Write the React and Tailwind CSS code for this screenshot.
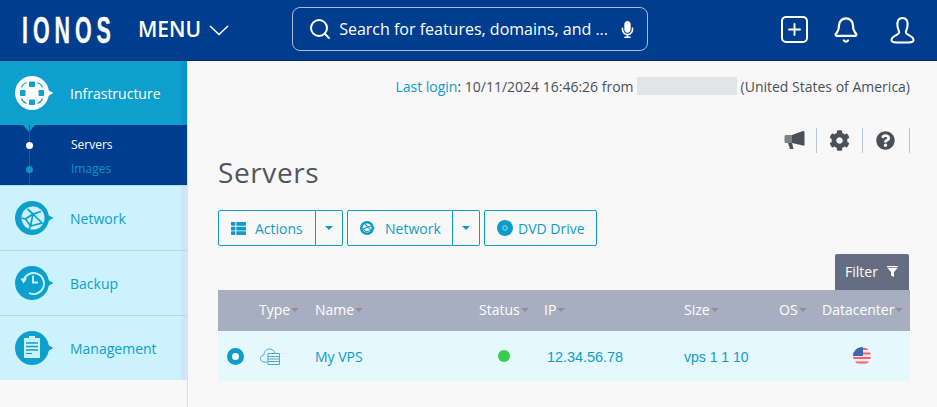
import React from "react";
import { Search, Plus, Bell } from "lucide-react";
import { FaCog, FaQuestionCircle, FaThList, FaMicrophone } from "react-icons/fa";

// round bubble with a small tail on the right, used by the side menu
function Bubble({ fill, children }) {
  return (
    <svg width="40" height="36" viewBox="0 0 40 36" className="shrink-0">
      <circle cx="17" cy="18" r="17" fill={fill} />
      <path d="M32 14.5 L38.5 18 L32 21.5 Z" fill={fill} />
      {children}
    </svg>
  );
}

function InfraIcon() {
  return (
    <Bubble fill="#ffffff">
      <rect x="14" y="6.5" width="6" height="5.5" rx="0.8" fill="#0da0cf" />
      <rect x="14" y="24.5" width="6" height="5.5" rx="0.8" fill="#0da0cf" />
      <rect x="5" y="15" width="5.5" height="6" rx="0.8" fill="#0da0cf" />
      <rect x="23.5" y="15" width="5.5" height="6" rx="0.8" fill="#0da0cf" />
      <path d="M6.5 12.5 Q7.5 9 11.5 7.5 M22.5 7.5 Q26.5 9 27.5 12.5 M27.5 23.5 Q26.5 27 22.5 28.5 M11.5 28.5 Q7.5 27 6.5 23.5" stroke="#0da0cf" strokeWidth="1.1" fill="none" />
    </Bubble>
  );
}

function NetworkIcon() {
  return (
    <Bubble fill="#0da0cf">
      <circle cx="18" cy="18" r="11.5" fill="#ccf3fd" />
      <path d="M12.5 9 L18 14 L26 11.5 M18 14 L10.5 19 L15.5 26 L27 23 L18 14 M10.5 19 L6.5 18 M15.5 26 L14 29.5 M18 14 L15.5 26" stroke="#0da0cf" strokeWidth="1.7" fill="none" />
    </Bubble>
  );
}

function BackupIcon() {
  return (
    <Bubble fill="#0da0cf">
      <path d="M8.5 15.5 A10.5 10.5 0 1 1 14 28" stroke="#ccf3fd" strokeWidth="1.8" fill="none" />
      <path d="M5.5 13.5 L12 13.5 L8.5 18.5 Z" fill="#ccf3fd" />
      <path d="M18 10.5 V17.5 H23" stroke="#ccf3fd" strokeWidth="1.8" fill="none" />
    </Bubble>
  );
}

function ManagementIcon() {
  return (
    <Bubble fill="#0da0cf">
      <rect x="9" y="8" width="16" height="20" fill="#ccf3fd" />
      <rect x="14" y="6" width="6" height="2" fill="#ccf3fd" />
      <path d="M11 13 H23 M11 16.5 H23 M11 20 H23" stroke="#0da0cf" strokeWidth="1.5" />
      <path d="M11 23.5 H17" stroke="#0da0cf" strokeWidth="1.1" />
    </Bubble>
  );
}

function SideItem({ icon, label, active }) {
  return (
    <div className={`flex h-16 items-center pl-[15px] ${active ? "bg-[#0da0cf] text-white" : "bg-[#ccf3fd] text-[#0da0cf]"}`}>
      <div className="w-[55px]">{icon}</div>
      <span className="text-[14px]">{label}</span>
      <div className={`ml-auto h-full w-[6px] ${active ? "bg-[#0a96c6]" : "bg-[#cfe6f5]"}`} />
    </div>
  );
}

function Caret() {
  return <span className="inline-block h-0 w-0 border-x-[4px] border-t-[4px] border-x-transparent border-t-[#0d9cc9]" />;
}

function HeadCell({ label, className }) {
  return (
    <div className={`flex items-center gap-[1px] ${className}`}>
      <span>{label}</span>
      <span className="inline-block h-0 w-0 border-x-[4px] border-t-[4px] border-x-transparent border-t-[#8d8f98]" />
    </div>
  );
}

function ToolButton({ children, className }) {
  return (
    <div className={`flex h-full items-center border border-[#0d9cc9] ${className}`}>{children}</div>
  );
}

function UsFlag() {
  return (
    <svg width="18" height="18" viewBox="0 0 18 18">
      <defs>
        <clipPath id="flagclip"><circle cx="9" cy="9" r="9" /></clipPath>
      </defs>
      <g clipPath="url(#flagclip)">
        <rect width="18" height="18" fill="#fbe9e9" />
        <path d="M0 2 H18 M0 6.5 H18 M0 11 H18 M0 15.5 H18" stroke="#e8686c" strokeWidth="2" />
        <rect width="10" height="9" fill="#3f66ad" />
      </g>
    </svg>
  );
}

export default function App() {
  return (
    <div className="flex h-[407px] w-[937px] flex-col overflow-hidden bg-[#f8f8f8] text-[14px]" style={{ fontFamily: '"Open Sans", sans-serif' }}>
      {/* Header */}
      <header className="flex h-[61px] shrink-0 items-center border-b border-[#0b2a5e] bg-[#003d8f] text-white">
        <div className="ml-[22px] w-[92px] overflow-visible">
          <span className="block origin-left scale-x-[0.58] text-[37px] font-bold leading-none tracking-[8.5px] [-webkit-text-stroke:0.3px_white]" style={{ fontFamily: '"Liberation Sans", sans-serif' }}>IONOS</span>
        </div>
        <div className="ml-[24px] flex items-center gap-[8px]">
          <span className="text-[21px] font-semibold">MENU</span>
          <svg width="20" height="11" viewBox="0 0 20 11" fill="none" stroke="white" strokeWidth="1.6"><path d="M1 1 L10 9.5 L19 1" /></svg>
        </div>
        <div className="mb-[2px] ml-[63px] flex h-[44px] w-[356px] items-center rounded-[8px] border border-[#a9bcd8] pl-[15px] pr-[11px]">
          <Search size={24} strokeWidth={2} />
          <span className="ml-[7px] text-[16px]">Search for features, domains, and ...</span>
          <FaMicrophone size={17} className="ml-auto" />
        </div>
        <div className="mb-[1px] ml-[133px] flex h-[27px] w-[27px] items-center justify-center rounded-[5px] border-2 border-white">
          <Plus size={19} strokeWidth={2.4} />
        </div>
        <Bell size={28} strokeWidth={1.9} className="ml-[24px]" />
        <svg width="29" height="28" viewBox="0 0 28 28" fill="none" stroke="white" strokeWidth="2.1" className="ml-[28px]">
          <path d="M14 2 C9.5 2 8.5 6 9 10 C9.3 13 11 15 10.5 17 C10 19 3 20 3 24 C3 26 5 26.5 8 26.5 H20 C23 26.5 25 26 25 24 C25 20 18 19 17.5 17 C17 15 18.7 13 19 10 C19.5 6 18.5 2 14 2 Z" />
        </svg>
      </header>

      <div className="flex min-h-0 flex-1">
        {/* Side menu */}
        <aside className="w-[188px] shrink-0 border-r border-[#dcdfe5]">
          <SideItem active label="Infrastructure" icon={<InfraIcon />} />
          <div className="relative h-[61px] border-b border-[#b5d9ea] bg-[#003d8f] pt-[9px] text-[12px]">
            <div className="absolute left-[23px] top-0 h-0 w-0 border-x-[6px] border-t-[7px] border-x-transparent border-t-[#0da0cf]" />
            <div className="absolute bottom-0 left-[29px] top-0 w-px bg-[#1c5a9f]" />
            <div className="flex h-[22px] items-center text-white">
              <span className="relative ml-[26px] h-[7px] w-[7px] rounded-full bg-white" />
              <span className="ml-[38px]">Servers</span>
            </div>
            <div className="mt-[2px] flex h-[22px] items-center text-[#0d92c4]">
              <span className="relative ml-[26px] h-[7px] w-[7px] rounded-full bg-[#0d92c4]" />
              <span className="ml-[38px]">Images</span>
            </div>
          </div>
          <div className="border-b border-[#b5d9ea]"><SideItem label="Network" icon={<NetworkIcon />} /></div>
          <div className="border-b border-[#b5d9ea]"><SideItem label="Backup" icon={<BackupIcon />} /></div>
          <SideItem label="Management" icon={<ManagementIcon />} />
        </aside>

        {/* Main */}
        <main className="min-w-0 flex-1 pl-[30px] pr-[27px] text-[#4a5058]">
          <div className="flex h-[50px] items-center justify-end text-[14px]">
            <span className="text-[#0d9cc9]">Last login</span>
            <span>: 10/11/2024 16:46:26 from</span>
            <span className="ml-[3px] mr-[4px] h-[18px] w-[100px] bg-[#e3e4e5]" />
            <span>(United States of America)</span>
          </div>

          <div className="mt-[16px] flex h-[26px] items-center justify-end">
            <svg width="21" height="20" viewBox="0 0 21 20" fill="#4a5058">
              <path d="M0.5 6.5 C0.5 5.5 1 5 2 5 H8 V13 H2 C1 13 0.5 12.5 0.5 11.5 Z" fill="#7e8389" />
              <path d="M8 5 L19 1 C20 1 20.5 1.5 20.5 2.5 V14.5 C20.5 15.5 20 16 19 15.5 L8 13 Z" />
              <path d="M4 13 H8 L9.5 19 H6 Z" />
            </svg>
            <div className="ml-[11px] h-[25px] w-px bg-[#b9c4d6]" />
            <FaCog size={21} className="ml-[12px]" />
            <div className="ml-[12px] h-[25px] w-px bg-[#b9c4d6]" />
            <FaQuestionCircle size={19} className="ml-[13px]" />
            <div className="ml-[14px] h-[25px] w-px bg-[#b9c4d6]" />
          </div>

          <h1 className="mt-[1px] text-[28px] leading-[36px] tracking-[0.6px] text-[#51565c]">Servers</h1>

          {/* Toolbar */}
          <div className="mt-[20px] flex h-[36px] gap-[4px] text-[14px] text-[#0d9cc9]">
            <div className="flex">
              <ToolButton className="w-[98px] rounded-l-[2px] pl-[12px]">
                <FaThList size={15} />
                <span className="ml-[9px]">Actions</span>
              </ToolButton>
              <ToolButton className="w-[27px] justify-center rounded-r-[2px] border-l-0"><Caret /></ToolButton>
            </div>
            <div className="flex">
              <ToolButton className="w-[106px] rounded-l-[2px] pl-[12px]">
                <svg width="15" height="14" viewBox="0 0 15 14">
                  <circle cx="7" cy="7" r="7" fill="#0d9cc9" />
                  <circle cx="7" cy="7" r="4.5" fill="#f8f8f8" />
                  <path d="M5 3 L8 6 L11.5 5 M8 6 L3 8 L6 11 L11 9.5 L8 6" stroke="#0d9cc9" strokeWidth="1.1" fill="none" />
                  <path d="M14 6 L15 7 L14 8 Z" fill="#0d9cc9" />
                </svg>
                <span className="ml-[10px]">Network</span>
              </ToolButton>
              <ToolButton className="w-[27px] justify-center rounded-r-[2px] border-l-0"><Caret /></ToolButton>
            </div>
            <ToolButton className="w-[113px] rounded-[2px] pl-[12px]">
              <svg width="16" height="16" viewBox="0 0 16 16" className="shrink-0">
                <circle cx="8" cy="8" r="8" fill="#0d9cc9" />
                <circle cx="8" cy="8" r="2.2" fill="none" stroke="#9fdcef" strokeWidth="1" />
              </svg>
              <span className="ml-[5px]">DVD Drive</span>
            </ToolButton>
          </div>

          {/* Filter */}
          <div className="mt-[8px] flex justify-end">
            <div className="mr-[1px] flex h-[36px] w-[74px] items-center gap-[9px] rounded-t-[2px] bg-[#646d82] pb-[1px] pl-[10px] text-[14px] text-white">
              <span>Filter</span>
              <svg width="11" height="11" viewBox="0 0 11 11" fill="white"><path d="M0 0 H11 V1.2 H0 Z M0.5 2 H10.5 L7 6 V11 L4 9.5 V6 Z" /></svg>
            </div>
          </div>

          {/* Table */}
          <div className="flex h-[41px] items-center bg-[#a6aebf] pb-[2px] text-[14px] text-white">
            <HeadCell label="Type" className="ml-[41px] w-[56px]" />
            <HeadCell label="Name" className="w-[164px]" />
            <HeadCell label="Status" className="w-[65px]" />
            <HeadCell label="IP" className="w-[140px]" />
            <HeadCell label="Size" className="w-[95px]" />
            <HeadCell label="OS" className="w-[43px]" />
            <HeadCell label="Datacenter" />
          </div>
          <div className="flex h-[50px] items-center bg-[#e4f8fe] text-[14px] text-[#0d9cc9]">
            <div className="ml-[9px] h-[17px] w-[17px] rounded-full border-[5px] border-[#0d9cc9] bg-white" />
            <svg width="20" height="17" viewBox="0 0 20 17" fill="none" stroke="#4aa9cf" strokeWidth="1" className="ml-[16px]">
              <path d="M7 14 H4 C2 14 0.5 12.5 0.5 10.5 C0.5 8.5 2 7 4 7 C4 3.5 6.5 1 9.5 1 C12 1 14 2.5 15 5" />
              <path d="M8 5.5 H19.5 V16.5 H8 Z M8 8.5 H19.5 M8 11 H19.5 M8 13.5 H19.5" />
            </svg>
            <span className="ml-[35px] w-[183px]">My VPS</span>
            <div className="h-[12px] w-[12px] rounded-full bg-[#36cc4e]" />
            <span className="ml-[37px] mt-[3px] w-[137px] text-[14.4px]" style={{ fontFamily: '"Liberation Sans", sans-serif' }}>12.34.56.78</span>
            <span className="mt-[2px] w-[169px]" style={{ fontFamily: '"Liberation Sans", sans-serif' }}>vps 1 1 10</span>
            <UsFlag />
          </div>
        </main>
      </div>
    </div>
  );
}
